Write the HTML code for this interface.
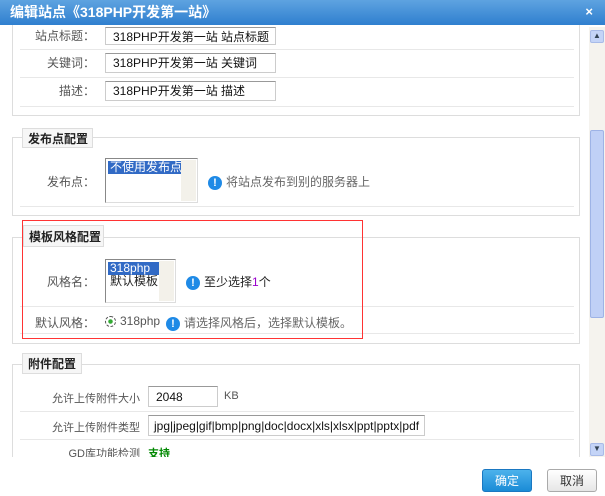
<!DOCTYPE html>
<html><head><meta charset="utf-8"><style>
*{margin:0;padding:0;box-sizing:border-box}
body{width:605px;height:496px;overflow:hidden;background:#fff;font-family:"Liberation Sans","Noto Sans CJK SC",sans-serif;font-size:12px;color:#333;position:relative}
.abs{position:absolute}
.title{left:0;top:0;width:605px;height:25px;background:linear-gradient(#5ea3e0,#2f7fcf);color:#fff;font-weight:bold;font-size:14px;line-height:24px;padding-left:10px;z-index:5}
.title .x{position:absolute;right:12px;top:0;font-size:13px}
.fs{border:1px solid #ddd}
.legend{border:1px solid #ddd;background:#f6f6f6;font-weight:bold;font-size:12px;color:#222;line-height:20px;padding-left:5px}
.hr{height:1px;background:#e8e8e8}
.lab{color:#555;text-align:right}
.inp{border:1px solid #ccc;border-top-color:#999;background:#fff;font-size:12px;color:#111;padding-left:7px;line-height:18px;white-space:nowrap}
.sel{border:1px solid #888;border-right-color:#ddd;border-bottom-color:#ddd;background:#fff;font-size:12px;color:#222;overflow:hidden;white-space:nowrap}
.sel .o{display:inline-block;background:#316ac5;color:#fff;margin:2px 0 0 2px;padding:0 2px;line-height:13px;white-space:nowrap}
.sb{position:absolute;right:1px;top:1px;bottom:1px;width:15px;background:#f3f1ea}
.ib{display:inline-block;width:14px;height:14px;border-radius:50%;background:#1f8ae6;color:#fff;font-weight:bold;font-size:11px;text-align:center;line-height:14px;vertical-align:middle;margin-right:4px}
.tip{color:#666;white-space:nowrap}
.btn{border-radius:3px;text-align:center;line-height:22px;font-size:12px}
</style></head><body>
<div class="abs title">编辑站点《318PHP开发第一站》<span class="x">×</span></div>

<div class="abs" style="left:589px;top:27px;width:16px;height:430px;background:#f5f3ee"></div>
<div class="abs" style="left:590px;top:30px;width:14px;height:13px;background:#c4d4f7;border:1px solid #a8bbe8;border-radius:2px;font-size:8px;text-align:center;color:#345">▲</div>
<div class="abs" style="left:590px;top:130px;width:14px;height:188px;background:#c0d0f6;border:1px solid #9eb3e6;border-radius:2px"></div>
<div class="abs" style="left:590px;top:443px;width:14px;height:13px;background:#c4d4f7;border:1px solid #a8bbe8;border-radius:2px;font-size:8px;text-align:center;color:#345">▼</div>

<div class="abs fs" style="left:12px;top:18px;width:568px;height:98px;border-top:none"></div>
<div class="abs lab" style="left:20px;top:28px;width:75px;line-height:16px">站点标题：</div>
<div class="abs inp" style="left:105px;top:27px;width:171px;height:18px">318PHP开发第一站 站点标题</div>
<div class="abs hr" style="left:20px;top:49px;width:554px"></div>
<div class="abs lab" style="left:20px;top:55px;width:75px;line-height:16px">关键词：</div>
<div class="abs inp" style="left:105px;top:53px;width:171px;height:20px">318PHP开发第一站 关键词</div>
<div class="abs hr" style="left:20px;top:77px;width:554px"></div>
<div class="abs lab" style="left:20px;top:83px;width:75px;line-height:16px">描述：</div>
<div class="abs inp" style="left:105px;top:81px;width:171px;height:20px">318PHP开发第一站 描述</div>
<div class="abs hr" style="left:20px;top:106px;width:554px"></div>

<div class="abs fs" style="left:12px;top:137px;width:568px;height:79px"></div>
<div class="abs legend" style="left:22px;top:128px;width:71px;height:20px">发布点配置</div>
<div class="abs lab" style="left:20px;top:173px;width:75px">发布点：</div>
<div class="abs sel" style="left:105px;top:158px;width:93px;height:45px"><div class="o">不使用发布点</div><div class="sb"></div></div>
<div class="abs tip" style="left:208px;top:173px"><span class="ib">!</span>将站点发布到别的服务器上</div>
<div class="abs hr" style="left:20px;top:206px;width:554px"></div>

<div class="abs fs" style="left:12px;top:237px;width:568px;height:107px"></div>
<div class="abs legend" style="left:23px;top:225px;width:81px;height:22px;line-height:22px">模板风格配置</div>
<div class="abs lab" style="left:20px;top:273px;width:75px">风格名：</div>
<div class="abs sel" style="left:105px;top:259px;width:71px;height:44px;line-height:13px"><div class="o" style="width:52px">318php</div><div style="padding-left:4px">默认模板</div><div class="sb"></div></div>
<div class="abs" style="left:186px;top:273px;color:#222"><span class="ib">!</span>至少选择<span style="color:#90c">1</span>个</div>
<div class="abs hr" style="left:20px;top:306px;width:554px"></div>
<div class="abs lab" style="left:20px;top:314px;width:75px">默认风格：</div>
<div class="abs" style="left:105px;top:314px;color:#555"><span style="display:inline-block;width:11px;height:11px;border:1px dashed #555;border-radius:50%;vertical-align:middle;margin-right:4px;background:radial-gradient(#3a3 30%,#fff 40%)"></span>318php</div>
<div class="abs tip" style="left:166px;top:314px"><span class="ib">!</span>请选择风格后，选择默认模板。</div>
<div class="abs hr" style="left:20px;top:333px;width:554px"></div>
<div class="abs" style="left:22px;top:220px;width:341px;height:119px;border:1px solid #f33"></div>

<div class="abs fs" style="left:12px;top:364px;width:568px;height:100px"></div>
<div class="abs legend" style="left:22px;top:353px;width:60px;height:21px">附件配置</div>
<div class="abs lab" style="left:20px;top:390px;width:120px;font-size:11px">允许上传附件大小</div>
<div class="abs inp" style="left:148px;top:386px;width:70px;height:21px;line-height:20px">2048</div>
<div class="abs" style="left:224px;top:390px;font-size:11px;color:#555">KB</div>
<div class="abs hr" style="left:20px;top:411px;width:554px"></div>
<div class="abs lab" style="left:20px;top:419px;width:120px;font-size:11px">允许上传附件类型</div>
<div class="abs inp" style="left:148px;top:415px;width:277px;height:21px;line-height:20px;padding-left:5px;overflow:hidden">jpg|jpeg|gif|bmp|png|doc|docx|xls|xlsx|ppt|pptx|pdf</div>
<div class="abs hr" style="left:20px;top:439px;width:554px"></div>
<div class="abs lab" style="left:20px;top:445px;width:120px;font-size:11px">GD库功能检测</div>
<div class="abs" style="left:148px;top:445px;color:#080;font-weight:bold;font-size:11px">支持</div>
<div class="abs" style="left:0;top:457px;width:589px;height:39px;background:#fff"></div>

<div class="abs btn" style="left:482px;top:469px;width:50px;height:23px;background:linear-gradient(#4cb2ec,#1a8bd6);border:1px solid #1a78c2;color:#fff">确定</div>
<div class="abs btn" style="left:547px;top:469px;width:50px;height:23px;background:linear-gradient(#fff,#e6e6e6);border:1px solid #aaa;color:#333">取消</div>
</body></html>
